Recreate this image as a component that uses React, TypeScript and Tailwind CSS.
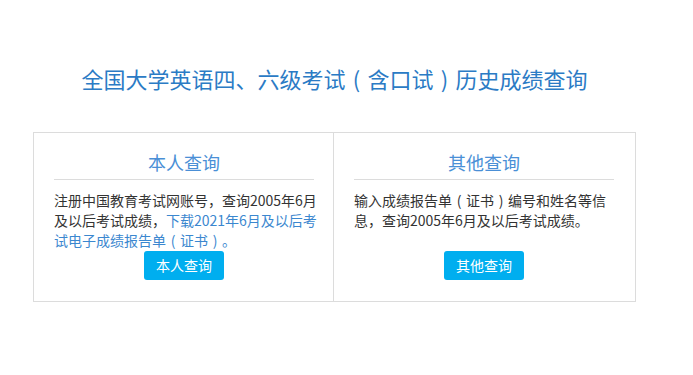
import React from "react";

const font = { fontFamily: '"Noto Sans CJK SC", "Noto Sans", sans-serif' };

function P({ c }: { c: string }) {
  return <span className="inline-block w-[1em] text-center">{c}</span>;
}

export default function App() {
  return (
    <div className="w-[693px] h-[375px] bg-white" style={font}>
      <div className="pt-[63px] pl-[33px]">
        <h1 className="w-[603px] text-center text-[22px] leading-[30px] font-normal text-[#2b7bc5] whitespace-nowrap">
          全国大学英语四、六级考试<P c="(" />含口试<P c=")" />历史成绩查询
        </h1>
        <div className="mt-[39px] w-[603px] h-[170px] border border-[#dcdcdc] flex">
          <div className="w-[300px] border-r border-[#dcdcdc] px-[20px] pt-[17px] pb-[20px] flex flex-col">
            <div className="w-[260px] text-center text-[18px] leading-[24px] pb-[5px] border-b border-[#dcdcdc] text-[#4a8fd6]">
              本人查询
            </div>
            <div className="mt-[10px] h-[60px] w-[270px] text-[14px] leading-[20px] text-[#333333] whitespace-nowrap">
              <div>注册中国教育考试网账号，查询2005年6月</div>
              <div>
                及以后考试成绩，<a className="text-[#3b87cf]">下载2021年6月及以后考</a>
              </div>
              <div>
                <a className="text-[#3b87cf]">
                  试电子成绩报告单<P c="(" />证书<P c=")" />。
                </a>
              </div>
            </div>
            <div className="w-[260px] flex justify-center mt-[1px]">
              <button className="w-[80px] h-[29px] rounded-[3px] bg-[#00aeef] text-white text-[14px] leading-[29px]">
                本人查询
              </button>
            </div>
          </div>
          <div className="w-[301px] px-[20px] pt-[17px] pb-[20px] flex flex-col">
            <div className="w-[260px] text-center text-[18px] leading-[24px] pb-[5px] border-b border-[#dcdcdc] text-[#4a8fd6]">
              其他查询
            </div>
            <div className="mt-[10px] h-[60px] w-[270px] text-[14px] leading-[20px] text-[#333333] whitespace-nowrap">
              <div>
                输入成绩报告单<P c="(" />证书<P c=")" />编号和姓名等信
              </div>
              <div>息，查询2005年6月及以后考试成绩。</div>
            </div>
            <div className="w-[260px] flex justify-center mt-[1px]">
              <button className="w-[80px] h-[29px] rounded-[3px] bg-[#00aeef] text-white text-[14px] leading-[29px]">
                其他查询
              </button>
            </div>
          </div>
        </div>
      </div>
    </div>
  );
}
